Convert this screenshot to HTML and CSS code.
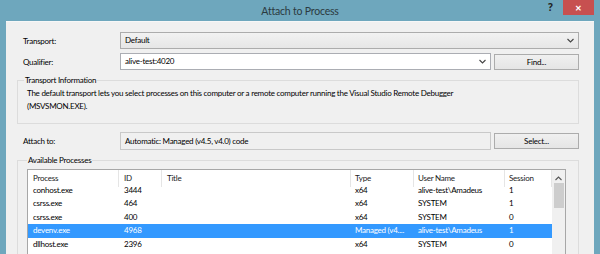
FILE: index.html
```html
<!DOCTYPE html>
<html lang="en">
<head>
  <meta charset="UTF-8" />
  <title>Attach to Process</title>
  <link rel="stylesheet" href="styles.css">
</head>
<body>
  <div class="window">
    <!-- title bar -->
    <div class="titlebar">
      <span class="title">Attach to Process</span>
      <span class="help">?</span>
      <span class="close">&#x2715;</span>
    </div>

    <div class="client">
      <div class="row">
        <label>Transport:</label>
        <div class="combo wide">Default
          <svg class="chev" width="7" height="5" viewBox="0 0 7 5"><path d="M0.5 1 L3.5 4 L6.5 1" fill="none" stroke="#444" stroke-width="1.1"/></svg>
        </div>
      </div>

      <div class="row">
        <label>Qualifier:</label>
        <div class="input">alive-test:4020
          <svg class="chev" width="7" height="5" viewBox="0 0 7 5"><path d="M0.5 1 L3.5 4 L6.5 1" fill="none" stroke="#444" stroke-width="1.1"/></svg>
        </div>
        <button class="btn">Find...</button>
      </div>

      <fieldset class="group info">
        <legend>Transport Information</legend>
        <p>The default transport lets you select processes on this computer or a remote computer running the Visual Studio Remote Debugger<br>(MSVSMON.EXE).</p>
      </fieldset>

      <div class="row attach">
        <label>Attach to:</label>
        <div class="readonly">Automatic: Managed (v4.5, v4.0) code</div>
        <button class="btn">Select...</button>
      </div>

      <fieldset class="group procs">
        <legend>Available Processes</legend>
        <div class="list">
          <div class="grid">
            <div class="hd">Process</div><div class="hd">ID</div><div class="hd">Title</div><div class="hd">Type</div><div class="hd">User Name</div><div class="hd">Session</div>

            <div>conhost.exe</div><div>3444</div><div></div><div>x64</div><div>alive-test\Amadeus</div><div>1</div>
            <div>csrss.exe</div><div>464</div><div></div><div>x64</div><div>SYSTEM</div><div>1</div>
            <div>csrss.exe</div><div>400</div><div></div><div>x64</div><div>SYSTEM</div><div>0</div>
            <div class="sel">devenv.exe</div><div class="sel">4968</div><div class="sel"></div><div class="sel">Managed (v4....</div><div class="sel">alive-test\Amadeus</div><div class="sel">1</div>
            <div>dllhost.exe</div><div>2396</div><div></div><div>x64</div><div>SYSTEM</div><div>0</div>
          </div>
          <div class="scrollbar">
            <svg class="up" width="7" height="5" viewBox="0 0 7 5"><path d="M0.5 4 L3.5 1 L6.5 4" fill="none" stroke="#555" stroke-width="1.1"/></svg>
            <div class="thumb"></div>
          </div>
        </div>
      </fieldset>
    </div>
  </div>
</body>
</html>
```

FILE: styles.css
```css
/* --- tokens --- */
:root {
  --frame: #6ea7bd;
  --face:  #f0f0f0;
  --edge:  #acacac;
  --sel:   #3399ff;
}

* { box-sizing: border-box; margin:0; padding:0; }

body {
  font-family: Lato, "Noto Sans", sans-serif;
  font-size: 8px;
  letter-spacing: -0.25px;
  color: #000;
  background: #fff;
}

.window {
  width: 600px;
  height: 254px;
  background: var(--frame);
  padding: 0 6px;
  display: flex;
  flex-direction: column;
  overflow: hidden;
}

/* --- title bar --- */
.titlebar {
  height: 21px;
  flex: none;
  display: flex;
  align-items: flex-start;
}
.title {
  flex: 1;
  margin-left: 46px;
  text-align: center;
  font-size: 10.5px;
  letter-spacing: -0.2px;
  line-height: 22px;
  color: #2b3a40;
}
.help {
  width: 15px;
  font-family: "Noto Sans", sans-serif;
  font-size: 10px;
  font-weight: 700;
  line-height: 15px;
  color: #222;
}
.close {
  width: 31px;
  height: 15px;
  background: #c75050;
  color: #fff;
  text-align: center;
  font-family: "Noto Sans", sans-serif;
  font-size: 8px;
  line-height: 15px;
  font-weight: 700;
}

/* --- client area --- */
.client {
  flex: 1;
  background: var(--face);
  padding: 10px 15px 0 11px;
  border-top: 1px solid #f7f7f7;
}

.row { display:flex; align-items:center; margin-bottom:4px; }
.row label { width:103px; padding-left:6px; flex:none; }

.combo, .input, .readonly {
  height: 17px;
  line-height: 15px;
  padding: 0 4px;
  display: flex;
  align-items: center;
  justify-content: space-between;
}
.combo {
  width: 459px;
  border: 1px solid var(--edge);
  background: linear-gradient(#f2f2f2, #e6e6e6);
}
.input {
  width: 371px;
  background: #fff;
  border: 1px solid #abadb3;
}
.readonly {
  width: 371px;
  height: 18px;
  border: 1px solid #c9c9c9;
  background: var(--face);
}
.chev { flex:none; }

.btn {
  width: 85px;
  height: 16px;
  margin-left: 3px;
  border: 1px solid var(--edge);
  background: linear-gradient(#f0f0f0, #e5e5e5);
  font: inherit;
  letter-spacing: inherit;
  color: #000;
}

/* --- group boxes --- */
.group {
  border: 1px solid #dcdcdc;
  padding: 0 6px;
  width: 562px;
}
.group legend { padding: 0 1px; line-height: 13px; }
.info { margin-top: 3px; height: 50px; }
.info p { padding-left: 3px; line-height: 13px; }
.attach { margin-top: 8px; }
.procs { margin-top: 2px; height: 120px; padding: 0 12px 0 9px; }

/* --- process list --- */
.list {
  margin-top: 2px;
  width: 539px;
  border: 1px solid #a7a7a7;
  background: #fff;
  display: flex;
  height: 100px;
}
.grid {
  width: 524px;
  display: grid;
  grid-template-columns: 91px 43px 189px 63px 91px 47px;
  grid-auto-rows: 13.5px;
  line-height: 13.5px;
  align-content: start;
}
.grid div { padding-left: 5px; white-space: nowrap; overflow: hidden; }
.grid .hd {
  height: 17px;
  line-height: 17px;
  border-right: 1px solid #e5e5e5;
  color: #222;
}
.grid div:nth-child(6n+4), .grid div:nth-child(6n+5), .grid div:nth-child(6n) { padding-left: 4px; }
.grid .sel { background: var(--sel); color: #fff; }

.scrollbar {
  width: 13px;
  background: #f0f0f0;
  display: flex;
  flex-direction: column;
  align-items: center;
}
.up { margin-top: 6px; }
.thumb {
  margin-top: 2px;
  width: 10px;
  height: 25px;
  background: #cdcdcd;
}
```
